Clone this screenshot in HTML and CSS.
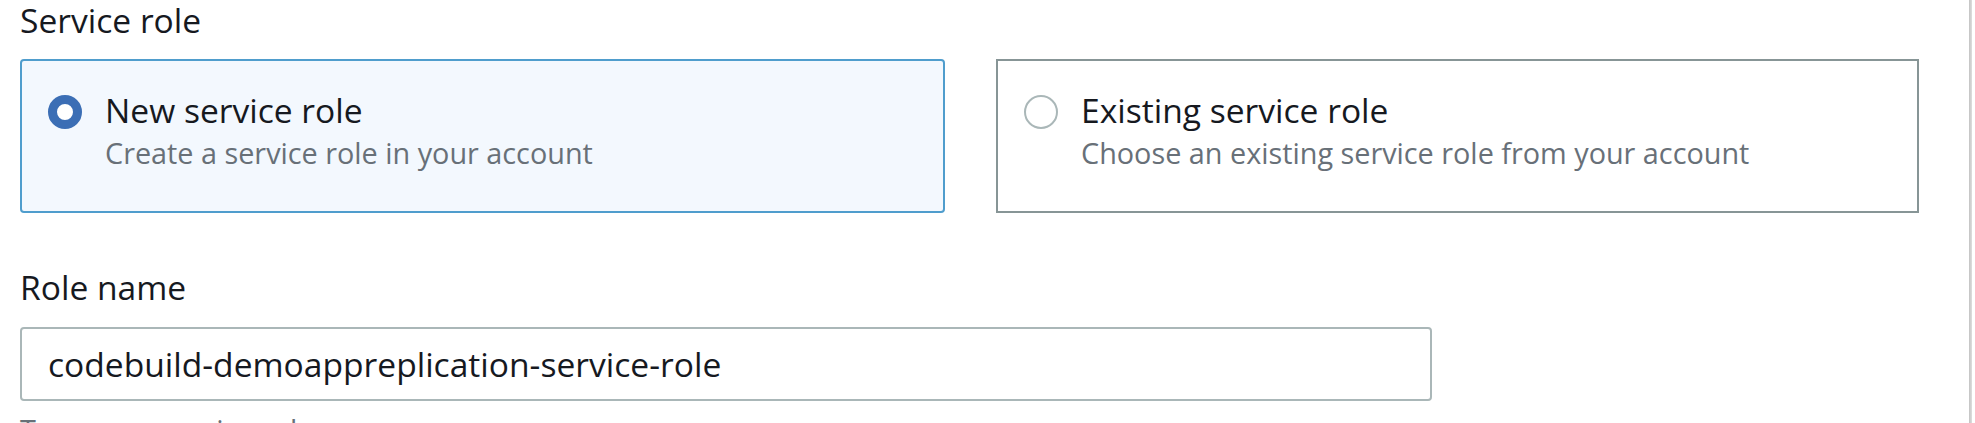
FILE: index.html
```html
<!DOCTYPE html>
<html lang="en">
<head>
<meta charset="utf-8">
<title>Service role</title>
<link rel="stylesheet" href="styles.css">
</head>
<body>
<div class="page">
  <main class="form">
    <section class="field">
      <div class="label">Service role</div>
      <div class="tiles">
        <div class="tile tile-selected">
          <span class="radio radio-checked"></span>
          <span class="tile-text">
            <span class="tile-title">New service role</span>
            <span class="tile-desc">Create a service role in your account</span>
          </span>
        </div>
        <div class="tile">
          <span class="radio"></span>
          <span class="tile-text">
            <span class="tile-title">Existing service role</span>
            <span class="tile-desc">Choose an existing service role from your account</span>
          </span>
        </div>
      </div>
    </section>
    <section class="field field-role">
      <div class="label">Role name</div>
      <input class="text-input" type="text" value="codebuild-demoappreplication-service-role">
      <div class="hint">Type your service role name</div>
    </section>
  </main>
  <div class="divider"></div>
</div>
</body>
</html>
```

FILE: styles.css
```css
html, body {
  margin: 0;
  padding: 0;
  background: #ffffff;
}

body {
  font-family: "Open Sans", "Noto Sans", sans-serif;
  color: #16191f;
  overflow: hidden;
}

.page {
  display: flex;
  height: 423px;
  overflow: hidden;
}

.form {
  width: 1969px;
  flex: none;
  padding-left: 20px;
  box-sizing: border-box;
}

.label {
  font-size: 33.6px;
  line-height: 40px;
  color: #16191f;
}

.tiles {
  display: grid;
  grid-template-columns: 925px 923px;
  column-gap: 51px;
  margin-top: 19px;
}

.tile {
  display: flex;
  align-items: flex-start;
  height: 154px;
  box-sizing: border-box;
  padding: 25px 24px 0 26px;
  border: 2px solid #879596;
  background: #ffffff;
}

.tile-selected {
  border-color: #4f9dcd;
  background: #f3f8fe;
  border-radius: 4px;
}

.radio {
  flex: none;
  width: 34px;
  height: 34px;
  box-sizing: border-box;
  margin-top: 9px;
  margin-right: 23px;
  border-radius: 50%;
  border: 2.5px solid #aab7b8;
  background: #ffffff;
}

.radio-checked {
  border: 9.5px solid #3b6eb5;
}

.tile-text {
  display: flex;
  flex-direction: column;
}

.tile-title {
  font-size: 33.6px;
  line-height: 48px;
  color: #16191f;
}

.tile-desc {
  font-size: 28.8px;
  line-height: 38.4px;
  color: #687078;
}

.field-role {
  margin-top: 54px;
}

.text-input {
  display: block;
  width: 1412px;
  height: 74px;
  box-sizing: border-box;
  margin: 20px 0 0 0;
  padding: 0 26px;
  border: 2px solid #aab7b8;
  border-radius: 4px;
  font-family: "Open Sans", "Noto Sans", sans-serif;
  font-size: 33.6px;
  color: #16191f;
  background: #ffffff;
  outline: none;
}

.hint {
  margin-top: 10px;
  font-size: 28.8px;
  line-height: 38.4px;
  color: #687078;
}

.divider {
  flex: none;
  width: 3px;
  height: 100%;
  background: linear-gradient(to right, #c2c2c2, #dedede);
}
```
